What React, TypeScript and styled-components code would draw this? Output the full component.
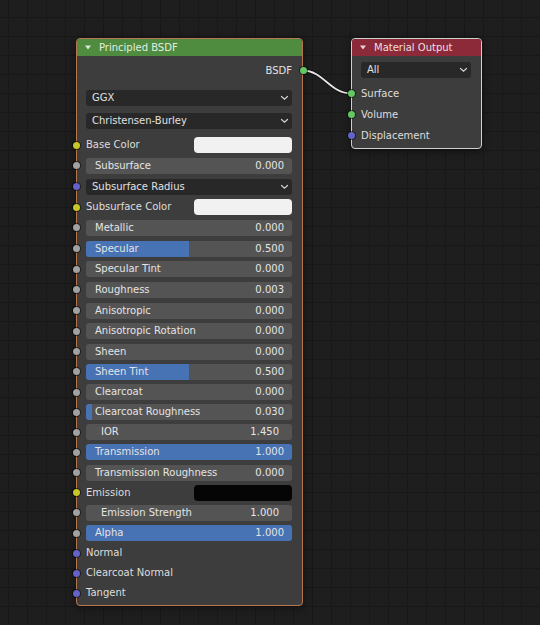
import React from "react";
import styled, { createGlobalStyle } from "styled-components";

type SocketType = "color" | "float" | "vector" | "shader";
type Widget = "color" | "slider" | "number" | "menu" | "none";

interface NodeInput {
  label: string;
  socket: SocketType;
  widget: Widget;
  value?: string;
  fill?: number;
  swatch?: string;
}

const socketColors: Record<SocketType, string> = {
  color: "#c7c729",
  float: "#a1a1a1",
  vector: "#6363c7",
  shader: "#63c763",
};

const GlobalStyle = createGlobalStyle`
  * { box-sizing: border-box; }
  html, body {
    margin: 0;
    padding: 0;
  }
  body {
    background: #1e1e1e;
    font-family: "DejaVu Sans", "Liberation Sans", sans-serif;
    font-size: 10px;
    color: #e0e0e0;
  }
`;

const Canvas = styled.div`
  position: relative;
  width: 540px;
  height: 625px;
  overflow: hidden;
  background-color: #1e1e1e;
  background-image: linear-gradient(to right, #181818 1px, transparent 1px),
    linear-gradient(to bottom, #181818 1px, transparent 1px);
  background-size: 19px 19px;
  background-position: 8px 17px;
`;

const LinkLayer = styled.svg`
  position: absolute;
  left: 0;
  top: 0;
  width: 540px;
  height: 625px;
  pointer-events: none;
`;

const Node = styled.div<{ $x: number; $y: number; $w: number; $outline: string }>`
  position: absolute;
  left: ${(p) => p.$x}px;
  top: ${(p) => p.$y}px;
  width: ${(p) => p.$w}px;
  background: #3d3d3d;
  border: 1px solid ${(p) => p.$outline};
  border-radius: 4px;
  box-shadow: 0 2px 8px rgba(0, 0, 0, 0.45);
`;

const NodeHeader = styled.div<{ $color: string }>`
  height: 17px;
  display: flex;
  align-items: center;
  gap: 8px;
  padding-left: 8px;
  background: ${(p) => p.$color};
  border-radius: 3px 3px 0 0;
  color: rgba(255, 255, 255, 0.86);
  line-height: 1;
`;

const NodeBody = styled.div<{ $top: number; $bottom: number }>`
  display: flex;
  flex-direction: column;
  padding: ${(p) => p.$top}px 0 ${(p) => p.$bottom}px;
`;

const OutputRow = styled.div`
  position: relative;
  height: 20px;
  display: flex;
  align-items: center;
  justify-content: flex-end;
  padding-right: 10px;
  color: #e2e2e2;
`;

const MenuStack = styled.div<{ $top: number }>`
  display: flex;
  flex-direction: column;
  gap: 7px;
  margin-top: ${(p) => p.$top}px;
  padding: 0 10px 0 9px;
`;

const Dropdown = styled.div`
  flex: 1 0 auto;
  height: 16px;
  display: flex;
  align-items: center;
  justify-content: space-between;
  padding: 0 3px 0 6px;
  border-radius: 3px;
  background: #282828;
  color: #e0e0e0;
  line-height: 1;
`;

const InputList = styled.div<{ $top: number }>`
  display: flex;
  flex-direction: column;
  margin-top: ${(p) => p.$top}px;
`;

const InputRow = styled.div<{ $h: number; $right: number }>`
  position: relative;
  height: ${(p) => p.$h}px;
  display: flex;
  align-items: center;
  gap: 4px;
  padding: 0 ${(p) => p.$right}px 0 9px;
  line-height: 1;
`;

const Socket = styled.span<{ $color: string; $side: "left" | "right" }>`
  position: absolute;
  top: 50%;
  ${(p) => p.$side}: -4.5px;
  width: 7px;
  height: 7px;
  margin-top: -3.5px;
  border-radius: 50%;
  background: ${(p) => p.$color};
  box-shadow: 0 0 0 1px rgba(0, 0, 0, 0.55);
`;

const PlainLabel = styled.span`
  flex: 1;
  color: #dedede;
  white-space: nowrap;
`;

const Swatch = styled.span<{ $color: string }>`
  width: 98px;
  height: 16px;
  border-radius: 4px;
  background: ${(p) => p.$color};
`;

const Field = styled.div<{ $number: boolean }>`
  position: relative;
  flex: 1;
  height: 16px;
  display: flex;
  align-items: center;
  justify-content: space-between;
  padding: 0 ${(p) => (p.$number ? 13 : 8)}px 0 ${(p) => (p.$number ? 15 : 9)}px;
  border-radius: 3px;
  background: #545454;
  overflow: hidden;
  color: #e4e4e4;
`;

const Fill = styled.span`
  position: absolute;
  left: 0;
  top: 0;
  bottom: 0;
  background: #4772b3;
`;

const FieldText = styled.span`
  position: relative;
  white-space: nowrap;
`;

const Chevron = () => (
  <svg width="9" height="6" viewBox="0 0 9 6">
    <path d="M1.5 1.5 L4.5 4.2 L7.5 1.5" fill="none" stroke="#d0d0d0" strokeWidth="1.2" strokeLinecap="round" />
  </svg>
);

const Collapse = () => (
  <svg width="6" height="5" viewBox="0 0 6 5">
    <path d="M0 0.5 H6 L3 4.5 Z" fill="rgba(255,255,255,0.8)" />
  </svg>
);

const inputs: NodeInput[] = [
  { label: "Base Color", socket: "color", widget: "color", swatch: "#f1f1f1" },
  { label: "Subsurface", socket: "float", widget: "slider", value: "0.000", fill: 0 },
  { label: "Subsurface Radius", socket: "vector", widget: "menu" },
  { label: "Subsurface Color", socket: "color", widget: "color", swatch: "#f1f1f1" },
  { label: "Metallic", socket: "float", widget: "slider", value: "0.000", fill: 0 },
  { label: "Specular", socket: "float", widget: "slider", value: "0.500", fill: 0.5 },
  { label: "Specular Tint", socket: "float", widget: "slider", value: "0.000", fill: 0 },
  { label: "Roughness", socket: "float", widget: "slider", value: "0.003", fill: 0.003 },
  { label: "Anisotropic", socket: "float", widget: "slider", value: "0.000", fill: 0 },
  { label: "Anisotropic Rotation", socket: "float", widget: "slider", value: "0.000", fill: 0 },
  { label: "Sheen", socket: "float", widget: "slider", value: "0.000", fill: 0 },
  { label: "Sheen Tint", socket: "float", widget: "slider", value: "0.500", fill: 0.5 },
  { label: "Clearcoat", socket: "float", widget: "slider", value: "0.000", fill: 0 },
  { label: "Clearcoat Roughness", socket: "float", widget: "slider", value: "0.030", fill: 0.03 },
  { label: "IOR", socket: "float", widget: "number", value: "1.450" },
  { label: "Transmission", socket: "float", widget: "slider", value: "1.000", fill: 1 },
  { label: "Transmission Roughness", socket: "float", widget: "slider", value: "0.000", fill: 0 },
  { label: "Emission", socket: "color", widget: "color", swatch: "#050505" },
  { label: "Emission Strength", socket: "float", widget: "number", value: "1.000" },
  { label: "Alpha", socket: "float", widget: "slider", value: "1.000", fill: 1 },
  { label: "Normal", socket: "vector", widget: "none" },
  { label: "Clearcoat Normal", socket: "vector", widget: "none" },
  { label: "Tangent", socket: "vector", widget: "none" },
];

const renderWidget = (input: NodeInput) => {
  switch (input.widget) {
    case "color":
      return (
        <>
          <PlainLabel>{input.label}</PlainLabel>
          <Swatch $color={input.swatch || "#fff"} />
        </>
      );
    case "menu":
      return (
        <Dropdown>
          <span>{input.label}</span>
          <Chevron />
        </Dropdown>
      );
    case "slider":
    case "number":
      return (
        <Field $number={input.widget === "number"}>
          {/* too small to show below one pixel */}
          {input.fill && input.fill >= 0.01 ? <Fill style={{ width: `${input.fill * 100}%` }} /> : null}
          <FieldText>{input.label}</FieldText>
          <FieldText>{input.value}</FieldText>
        </Field>
      );
    default:
      return <PlainLabel>{input.label}</PlainLabel>;
  }
};

const renderRows = (list: NodeInput[], h: number) =>
  list.map((input) => (
    <InputRow key={input.label} $h={h} $right={10}>
      <Socket $side="left" $color={socketColors[input.socket]} />
      {renderWidget(input)}
    </InputRow>
  ));

const App = () => {
  return (
    <Canvas>
      <GlobalStyle />
      <LinkLayer viewBox="0 0 540 625">
        <path d="M303 70.5 C323 70.5, 330 93.5, 351 93.5" fill="none" stroke="#141414" strokeWidth="3.6" />
        <path d="M303 70.5 C323 70.5, 330 93.5, 351 93.5" fill="none" stroke="#e6e6e6" strokeWidth="1.8" />
      </LinkLayer>

      <Node $x={76} $y={38} $w={227} $outline="#b8764e">
        <NodeHeader $color="#508c40">
          <Collapse />
          <span>Principled BSDF</span>
        </NodeHeader>
        <NodeBody $top={4} $bottom={1}>
          <OutputRow>
            BSDF
            <Socket $side="right" $color={socketColors.shader} />
          </OutputRow>
          <MenuStack $top={10}>
            <Dropdown>
              <span>GGX</span>
              <Chevron />
            </Dropdown>
            <Dropdown>
              <span>Christensen-Burley</span>
              <Chevron />
            </Dropdown>
          </MenuStack>
          <InputList $top={5.8}>
            {renderRows(inputs.slice(0, 10), 20.7)}
            {renderRows(inputs.slice(10), 20.15)}
          </InputList>
        </NodeBody>
      </Node>

      <Node $x={351} $y={38} $w={131} $outline="#cfcfcf">
        <NodeHeader $color="#8c2a3a">
          <Collapse />
          <span>Material Output</span>
        </NodeHeader>
        <NodeBody $top={6} $bottom={2}>
          <MenuStack $top={0}>
            <Dropdown>
              <span>All</span>
              <Chevron />
            </Dropdown>
          </MenuStack>
          <InputList $top={5}>
            <InputRow $h={21} $right={8}>
              <Socket $side="left" $color={socketColors.shader} />
              <PlainLabel>Surface</PlainLabel>
            </InputRow>
            <InputRow $h={21} $right={8}>
              <Socket $side="left" $color={socketColors.shader} />
              <PlainLabel>Volume</PlainLabel>
            </InputRow>
            <InputRow $h={21} $right={8}>
              <Socket $side="left" $color={socketColors.vector} />
              <PlainLabel>Displacement</PlainLabel>
            </InputRow>
          </InputList>
        </NodeBody>
      </Node>
    </Canvas>
  );
};

export default App;
